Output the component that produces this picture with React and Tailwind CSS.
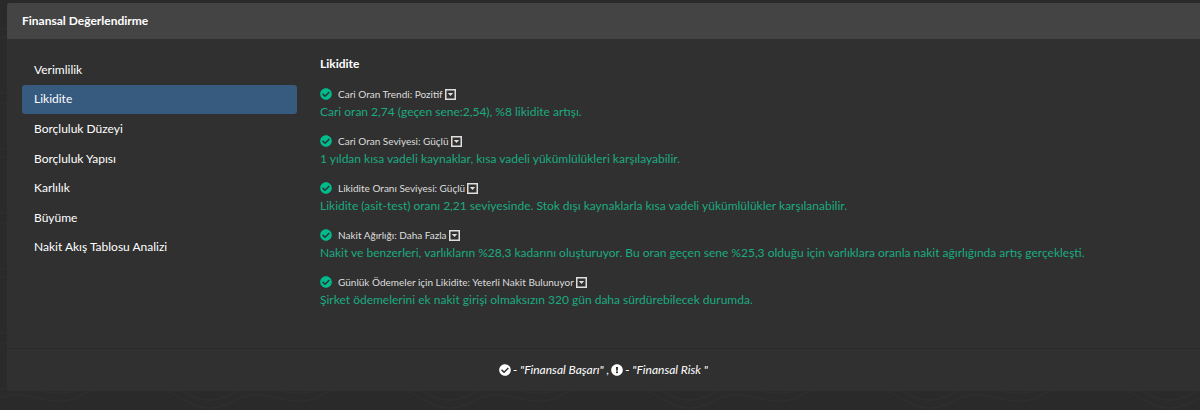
import { useState } from 'react';
import { FaCheckCircle, FaExclamationCircle } from 'react-icons/fa';

const categories = [
  'Verimlilik',
  'Likidite',
  'Borçluluk Düzeyi',
  'Borçluluk Yapısı',
  'Karlılık',
  'Büyüme',
  'Nakit Akış Tablosu Analizi',
];

const results = [
  {
    title: 'Cari Oran Trendi: Pozitif',
    text: 'Cari oran 2,74 (geçen sene:2,54), %8 likidite artışı.',
  },
  {
    title: 'Cari Oran Seviyesi: Güçlü',
    text: '1 yıldan kısa vadeli kaynaklar, kısa vadeli yükümlülükleri karşılayabilir.',
  },
  {
    title: 'Likidite Oranı Seviyesi: Güçlü',
    text: 'Likidite (asit-test) oranı 2,21 seviyesinde. Stok dışı kaynaklarla kısa vadeli yükümlülükler karşılanabilir.',
  },
  {
    title: 'Nakit Ağırlığı: Daha Fazla',
    text: 'Nakit ve benzerleri, varlıkların %28,3 kadarını oluşturuyor. Bu oran geçen sene %25,3 olduğu için varlıklara oranla nakit ağırlığında artış gerçekleşti.',
  },
  {
    title: 'Günlük Ödemeler için Likidite: Yeterli Nakit Bulunuyor',
    text: 'Şirket ödemelerini ek nakit girişi olmaksızın 320 gün daha sürdürebilecek durumda.',
  },
];

const CaretSquare = () => (
  <svg viewBox="0 0 11 11" className="w-[11px] h-[11px]" aria-hidden="true">
    <rect x="0.75" y="0.75" width="9.5" height="9.5" fill="none" stroke="currentColor" strokeWidth="1.5" />
    <path d="M2.8 4.1h5.4L5.5 7z" fill="currentColor" />
  </svg>
);

// faint contour lines behind the card
const Contours = () => (
  <svg className="absolute inset-0 w-full h-full" aria-hidden="true">
    <defs>
      <pattern id="contours" width="240" height="120" patternUnits="userSpaceOnUse">
        <g fill="none" stroke="#2f2f2f" strokeWidth="1">
          <path d="M0 30C30 18 50 44 80 28S140 6 170 24s40 22 70 6" />
          <path d="M0 38C30 26 50 52 80 36s60-22 90-4 40 22 70 6" />
          <path d="M0 94c40-16 60 14 100 0s70-24 140 0" />
          <path d="M0 104c40-16 60 14 100 0s70-24 140 0" />
          <ellipse cx="180" cy="70" rx="36" ry="14" />
          <ellipse cx="180" cy="70" rx="26" ry="8" />
        </g>
      </pattern>
    </defs>
    <rect width="100%" height="100%" fill="url(#contours)" />
  </svg>
);

const App = () => {
  const [active, setActive] = useState('Likidite');

  return (
    <div className="relative min-h-screen bg-[#2a2a2a] pt-[3px] pl-[7px] font-['Lato',sans-serif] text-[12px] leading-[18px] text-white overflow-hidden">
      <Contours />

      <section className="relative bg-[#303030] rounded-l-[3px]">
        {/* HEADER */}
        <header className="bg-[#444444] px-[15px] py-[9px] rounded-tl-[3px]">
          <h2 className="font-bold">Finansal Değerlendirme</h2>
        </header>

        {/* BODY */}
        <div className="flex gap-[23px] px-[15px] pt-4 pb-[39px]">
          <nav className="w-[275px] h-[207px] shrink-0 flex flex-col">
            {categories.map(name => (
              <button
                key={name}
                type="button"
                onClick={() => setActive(name)}
                className={`flex-1 px-3 text-left rounded-[3px] ${
                  name === active ? 'bg-[#375a7f]' : ''
                }`}
              >
                {name}
              </button>
            ))}
          </nav>

          <div className="flex-1">
            <h3 className="font-bold">Likidite</h3>

            <ul className="mt-3 flex flex-col gap-[11px]">
              {results.map(r => (
                <li key={r.title}>
                  <div className="flex items-center text-[10px] leading-[18px] text-[#dedede]">
                    <FaCheckCircle className="w-3 h-3 mr-1.5 text-[#00bc8c]" />
                    <span>{r.title}</span>
                    <button type="button" aria-label="Detay" className="ml-0.5">
                      <CaretSquare />
                    </button>
                  </div>
                  <p className="text-[#1bab80]">{r.text}</p>
                </li>
              ))}
            </ul>
          </div>
        </div>

        {/* LEGEND */}
        <footer className="flex items-center justify-center gap-0.5 border-t border-[#2b2b2b] py-3 italic">
          <FaCheckCircle className="w-3 h-3" />
          <span>- "Finansal Başarı" ,</span>
          <FaExclamationCircle className="w-3 h-3" />
          <span>- "Finansal Risk "</span>
        </footer>
      </section>
    </div>
  );
};

export default App;
